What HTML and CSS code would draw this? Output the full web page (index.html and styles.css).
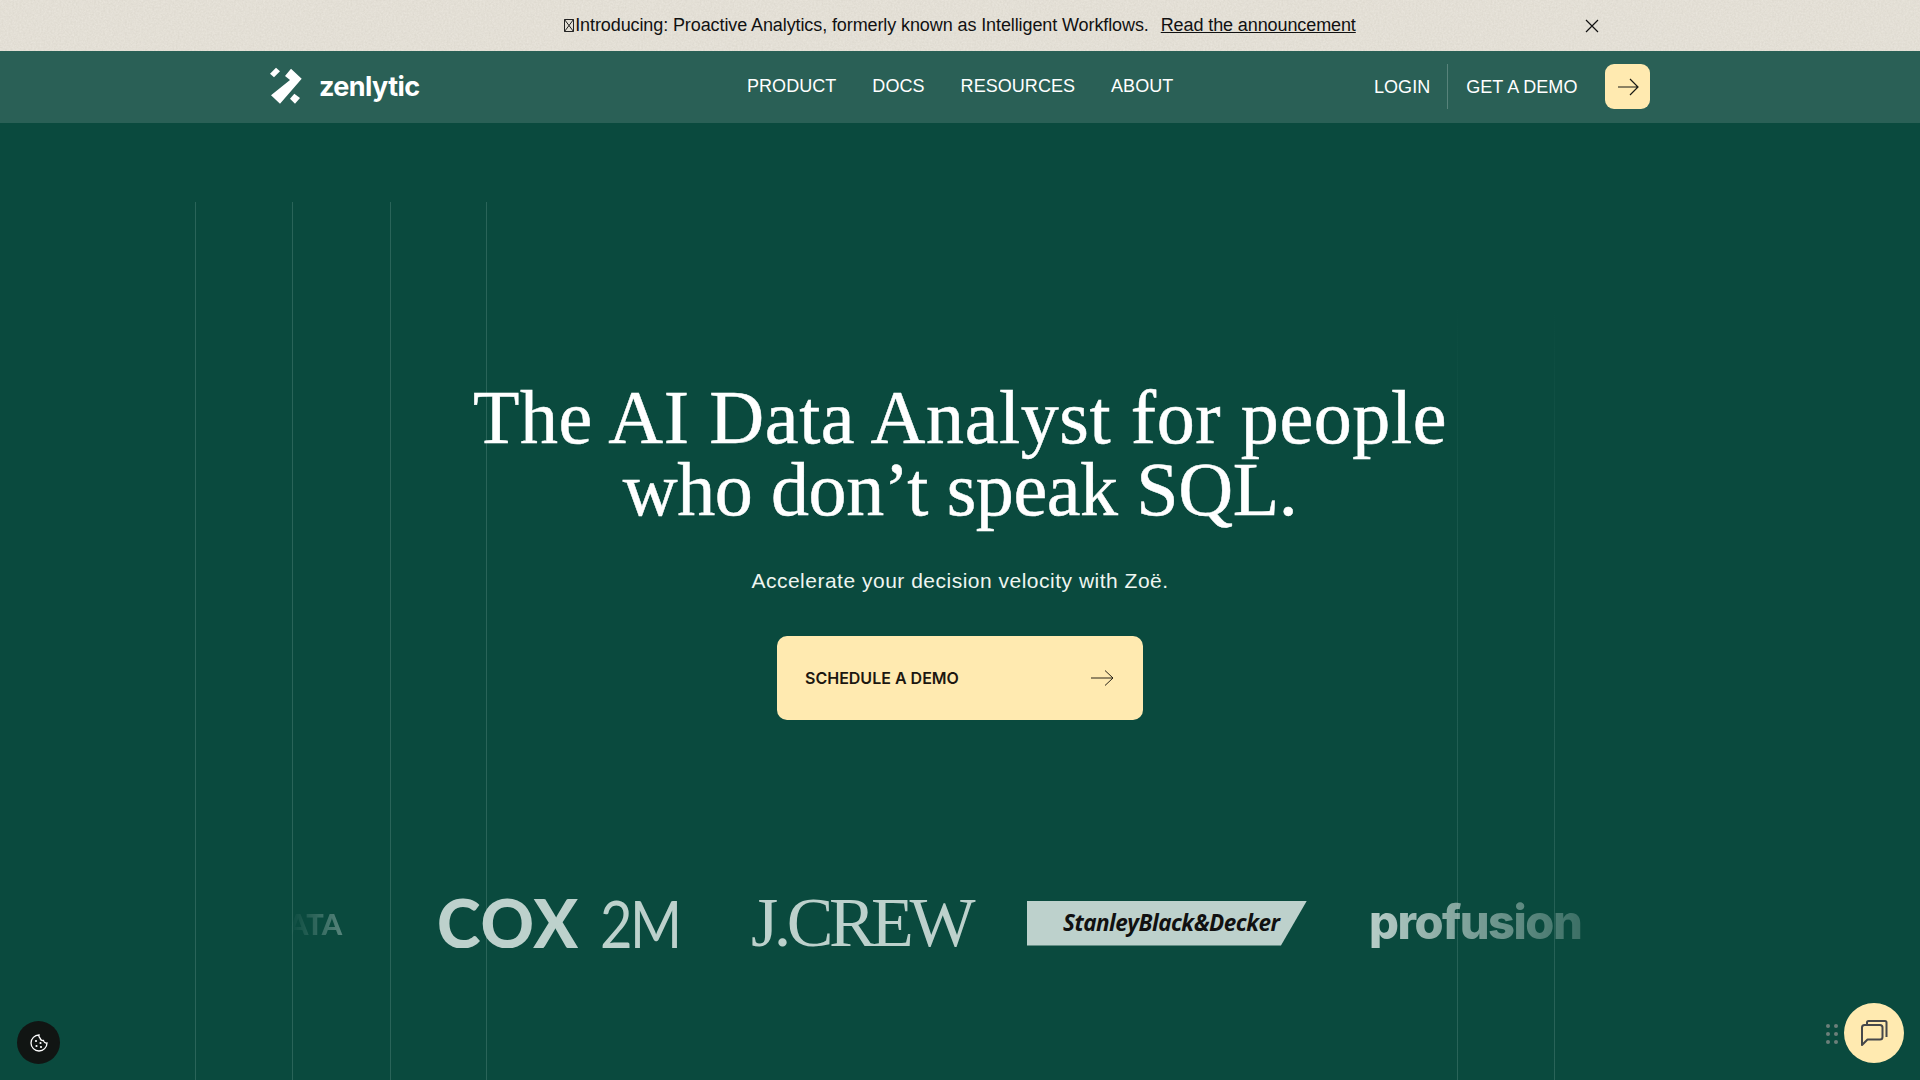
FILE: index.html
```html
<!DOCTYPE html>
<html lang="en">
<head>
<meta charset="utf-8">
<title>Zenlytic</title>
<link rel="stylesheet" href="styles.css">
</head>
<body>
<div class="page">
  <div class="banner">
    <svg class="grain" width="100%" height="100%" aria-hidden="true"><filter id="paper"><feTurbulence type="fractalNoise" baseFrequency="0.55" numOctaves="3" seed="4"/><feColorMatrix values="0 0 0 0 0.45  0 0 0 0 0.42  0 0 0 0 0.35  0 0 0 0.28 -0.03"/></filter><rect width="100%" height="100%" filter="url(#paper)"/></svg>
    <p class="banner-text"><span class="banner-msg"><svg class="tofu" width="10" height="13" viewBox="0 0 10 13" aria-hidden="true"><path d="M.5.5h9v12h-9zM.5.5l9 12M9.500.5l-9 12" stroke="#222" stroke-width="1" fill="none"/></svg>Introducing: Proactive Analytics, formerly known as Intelligent Workflows.</span><a href="#" class="banner-link">Read the announcement</a></p>
    <svg class="banner-close" width="16" height="16" viewBox="0 0 16 16" aria-hidden="true"><path d="M2 2l12 12M14 2L2 14" stroke="#111" stroke-width="1.2" fill="none"/></svg>
  </div>
  <header class="nav">
    <a href="#" class="brand">
      <svg width="35" height="42" viewBox="0 0 35 42" aria-hidden="true"><path fill="#fff" d="M0 7.700L6 1.700 10 5.300 4 11.300z"/><path fill="#fff" d="M15 10L21 2.700 31.700 12.700 10 37.700 1 29.300 20 14z"/><path fill="#fff" d="M20 32.700L24.300 27.700 30 32 25 37.700z"/></svg>
      <span class="brand-name">zenlytic</span>
    </a>
    <nav class="nav-links">
      <a href="#">PRODUCT</a><a href="#">DOCS</a><a href="#">RESOURCES</a><a href="#">ABOUT</a>
    </nav>
    <div class="nav-actions">
      <a href="#" class="login"><span>LOGIN</span></a>
      <a href="#" class="demo">GET A DEMO</a>
      <a href="#" class="demo-btn"><svg width="24" height="20" viewBox="0 0 24 20" aria-hidden="true"><path d="M2 10h20M14 2l8 8-8 8" stroke="#1a1a14" stroke-width="1.2" fill="none"/></svg></a>
    </div>
  </header>
  <main class="hero">
    <i class="vline l1"></i><i class="vline l2"></i><i class="vline l3"></i><i class="vline l4"></i><i class="vline r1"></i><i class="vline r2"></i>
    <h1 class="title">The AI Data Analyst for people<br><span class="title-tight">who don’t speak SQL.</span></h1>
    <p class="subtitle">Accelerate your decision velocity with Zoë.</p>
    <a href="#" class="cta"><span>SCHEDULE A DEMO</span><svg width="24" height="20" viewBox="0 0 24 20" aria-hidden="true"><path d="M1 10h22M15 2.500l8 7.500-8 7.500" stroke="#2a2418" stroke-width="1" fill="none"/></svg></a>
    <div class="logos">
      <span class="logo l-ata">ATA</span>
      <span class="logo l-cox">COX <b>2M</b></span>
      <span class="logo l-crew">J.CREW</span>
      <span class="logo l-sbd"><em>StanleyBlack&amp;Decker</em></span>
      <span class="logo l-pro">profusion</span>
    </div>
  </main>
  <button class="cookie" aria-label="Cookies"><svg width="20" height="20" viewBox="0 0 20 20" aria-hidden="true"><path d="M10 2a8 8 0 1 0 8 8 3 3 0 0 1-3.500-2.500A3.200 3.200 0 0 1 11 5 3 3 0 0 1 10 2z" stroke="#fff" stroke-width="1.300" fill="none"/><circle cx="7" cy="8" r="1.100" fill="#fff"/><circle cx="11.500" cy="10" r="1.100" fill="#fff"/><circle cx="7.500" cy="13" r="1.100" fill="#fff"/><circle cx="12" cy="14" r="1.100" fill="#fff"/></svg></button>
  <div class="grip"><i></i><i></i><i></i><i></i><i></i><i></i></div>
  <button class="chat" aria-label="Chat"><svg width="30" height="30" viewBox="0 0 30 30" aria-hidden="true"><path d="M8 6V4.500C8 3.500 8.500 3 9.500 3H26c1 0 1.500.5 1.500 1.500V19M3 9.500C3 8 4 7 5.500 7H21c1.500 0 2.500 1 2.500 2.500V19c0 1.500-1 2.500-2.500 2.500H8.500L3 27z" stroke="#45474a" stroke-width="2" fill="none" stroke-linejoin="round"/></svg></button>
</div>
</body>
</html>
```
FILE: styles.css
```css
* { box-sizing: border-box; }
html, body { margin: 0; height: 100%; }
body { font-family: "Liberation Sans", Arial, sans-serif; background: #0a4a3e; overflow: hidden; }
a { color: inherit; text-decoration: none; }
.page { position: relative; height: 1080px; overflow: hidden; display: flex; flex-direction: column; }

.banner { position: relative; height: 51px; flex: none; background: #e9e5dc; display: flex; align-items: center; justify-content: center; color: #111; }
.grain { position: absolute; inset: 0; }
.banner-text { position: relative; margin: 0; font-size: 18px; letter-spacing: -0.1px; display: flex; align-items: center; gap: 12px; }
.banner-msg { display: flex; align-items: center; gap: 1px; }
.tofu { flex: none; }
.banner-link { text-decoration: underline; }
.banner-close { position: absolute; left: 1584px; top: 18px; }

.nav { height: 72px; flex: none; background: #2a6056; color: #fff; display: grid; grid-template-columns: 477px 627px auto; padding-left: 270px; align-items: center; font-size: 18px; }
.brand { display: flex; align-items: center; gap: 14px; }
.brand-name { font: 700 27px/1 Inter, "Liberation Sans", sans-serif; letter-spacing: -0.6px; margin-top: -2px; }
.nav-links { display: flex; gap: 36px; letter-spacing: 0.05px; margin-top: -1px; }
.nav-actions { display: flex; align-items: center; letter-spacing: 0.05px; margin-top: -1px; }
.login { padding: 2px 17px 0 0; height: 45px; display: flex; align-items: center; border-right: 1px solid rgba(255,255,255,.22); }
.demo { padding: 2px 0 0 18px; margin-right: 28px; }
.demo-btn { width: 45px; height: 45px; border-radius: 9px; background: #ffeab0; display: flex; align-items: center; justify-content: center; }

.hero { position: relative; flex: 1; display: flex; flex-direction: column; align-items: center; padding-top: 258px; color: #fff; }
.vline { position: absolute; top: 79px; bottom: 0; width: 1px; background: #2a6459; }
.l1 { left: 195px; } .l2 { left: 292px; } .l3 { left: 390px; } .l4 { left: 486px; }
.r1, .r2 { background: linear-gradient(to bottom, transparent 0, transparent 12%, #1d5b50 45%, #2a6459 100%); }
.r1 { left: 1457px; } .r2 { left: 1554px; }
.title { position: relative; margin: 0; font: 400 76px/72px "Liberation Serif", "Times New Roman", serif; text-align: center; letter-spacing: 0.6px; -webkit-text-stroke: 0.5px #fff; }
.title-tight { letter-spacing: -0.4px; }
.subtitle { position: relative; margin: 43px 0 0; font-size: 21px; line-height: 26px; letter-spacing: 0.5px; color: #eef5f0; }
.cta { position: relative; margin-top: 42px; width: 366px; height: 84px; padding: 0 29px 0 28px; border-radius: 10px; background: #ffeab0; color: #1c1710; display: flex; align-items: center; justify-content: space-between; font: 600 16px/1 Inter, sans-serif; }

.logos { position: relative; align-self: flex-start; margin-left: 270px; width: 1320px; margin-top: 178px; height: 50px; display: flex; align-items: center; color: #bdd1cc; white-space: nowrap; -webkit-mask-image: linear-gradient(to right, transparent 20px, #000 140px, #000 1090px, rgba(0,0,0,.25) 1320px); mask-image: linear-gradient(to right, transparent 20px, #000 140px, #000 1090px, rgba(0,0,0,.25) 1320px); }
.logo { display: block; flex: none; }
.l-ata { font: 900 29px/1 Lato, sans-serif; margin-left: 18px; width: 149px; }
.l-cox { font: 900 66px/1 Lato, sans-serif; letter-spacing: 1px; width: 314px; }
.l-cox b { display: inline-block; font: 400 66px/1 Lato, sans-serif; letter-spacing: -3px; margin-left: 4px; transform: scaleX(.85); transform-origin: left center; }
.l-crew { font: 400 70px/1 "Liberation Serif", serif; letter-spacing: -4.5px; width: 276px; }
.l-sbd { width: 280px; height: 45px; background: #bdd1cc; clip-path: polygon(0 0, 100% 0, 90.700% 100%, 0 100%); display: flex; align-items: center; margin-right: 62px; padding-left: 36px; }
.l-sbd em { font: italic 700 22.500px/1 "Open Sans", sans-serif; color: #111; letter-spacing: -0.5px; }
.l-pro { font: 800 47px/1 Inter, sans-serif; letter-spacing: -1.500px; margin-top: -4px; }

.cookie { position: absolute; left: 17px; top: 1021px; width: 43px; height: 43px; border: 0; border-radius: 50%; background: #111513; display: flex; align-items: center; justify-content: center; padding: 0; }
.grip { position: absolute; left: 1826px; top: 1024px; display: grid; grid-template-columns: 4px 4px; gap: 4px 4px; }
.grip i { width: 4px; height: 4px; border-radius: 50%; background: #6c7f7a; }
.chat { position: absolute; left: 1844px; top: 1003px; width: 60px; height: 60px; border: 0; border-radius: 50%; background: #ffeab0; display: flex; align-items: center; justify-content: center; padding: 0; }
```
